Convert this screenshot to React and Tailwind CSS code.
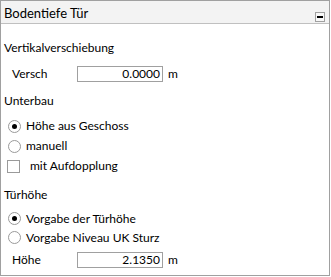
import React from 'react'

const Radio = ({ checked, label }) => (
  <div className="h-[20px] flex items-center">
    <span className="ml-[4px] w-[13px] h-[13px] rounded-full border border-[#9a9a9a] bg-white flex items-center justify-center shrink-0">
      {checked && <span className="w-[5px] h-[5px] rounded-full bg-black" />}
    </span>
    <span className="ml-[5px]">{label}</span>
  </div>
)

const Field = ({ label, value }) => (
  <div className="h-[20px] flex items-center">
    <span className="ml-[8px] w-[65px]">{label}</span>
    <div className="w-[86px] h-[16px] border border-[#a0a0a0] bg-white flex items-center justify-end pr-[2px] leading-none">
      {value}
    </div>
    <span className="ml-[5px]">m</span>
  </div>
)

const App = () => {
  return (
    <div className="w-[331px] h-[277px] bg-white text-black text-[12px] font-['Lato',sans-serif]">
      <div className="w-[330px] h-[276px] border border-[#a0a0a0] flex flex-col">
        <div className="h-[23px] bg-[#f3f3f3] border-b border-[#c0c0c0] flex justify-between shrink-0">
          <span className="pl-[3px] pt-[3px] text-[13px]">Bodentiefe Tür</span>
          <span className="self-end mb-[1px] mr-[4px] w-[10px] h-[10px] border border-[#a0a0a0] bg-[#f8f8f8] flex items-center justify-center">
            <span className="w-[6px] h-[2px] bg-black" />
          </span>
        </div>

        <div className="flex flex-col pl-[3px] pt-[14px]">
          <div className="h-[20px] flex items-center">Vertikalverschiebung</div>
          <div className="mt-[6px]">
            <Field label="Versch" value="0.0000" />
          </div>

          <div className="mt-[7px] h-[20px] flex items-center">Unterbau</div>
          <div className="mt-[5px]">
            <Radio checked label="Höhe aus Geschoss" />
            <Radio label="manuell" />
            <div className="h-[20px] flex items-center">
              <span className="ml-[3px] w-[13px] h-[13px] border border-[#9a9a9a] bg-white shrink-0" />
              <span className="ml-[10px]">mit Aufdopplung</span>
            </div>
          </div>

          <div className="mt-[9px] h-[20px] flex items-center">Türhöhe</div>
          <div className="mt-[4px]">
            <div className="h-[19px] flex flex-col justify-center">
              <Radio checked label="Vorgabe der Türhöhe" />
            </div>
            <div className="h-[19px] flex flex-col justify-center">
              <Radio label="Vorgabe Niveau UK Sturz" />
            </div>
          </div>
          <div className="mt-[3px]">
            <Field label="Höhe" value="2.1350" />
          </div>
        </div>
      </div>
    </div>
  )
}

export default App
